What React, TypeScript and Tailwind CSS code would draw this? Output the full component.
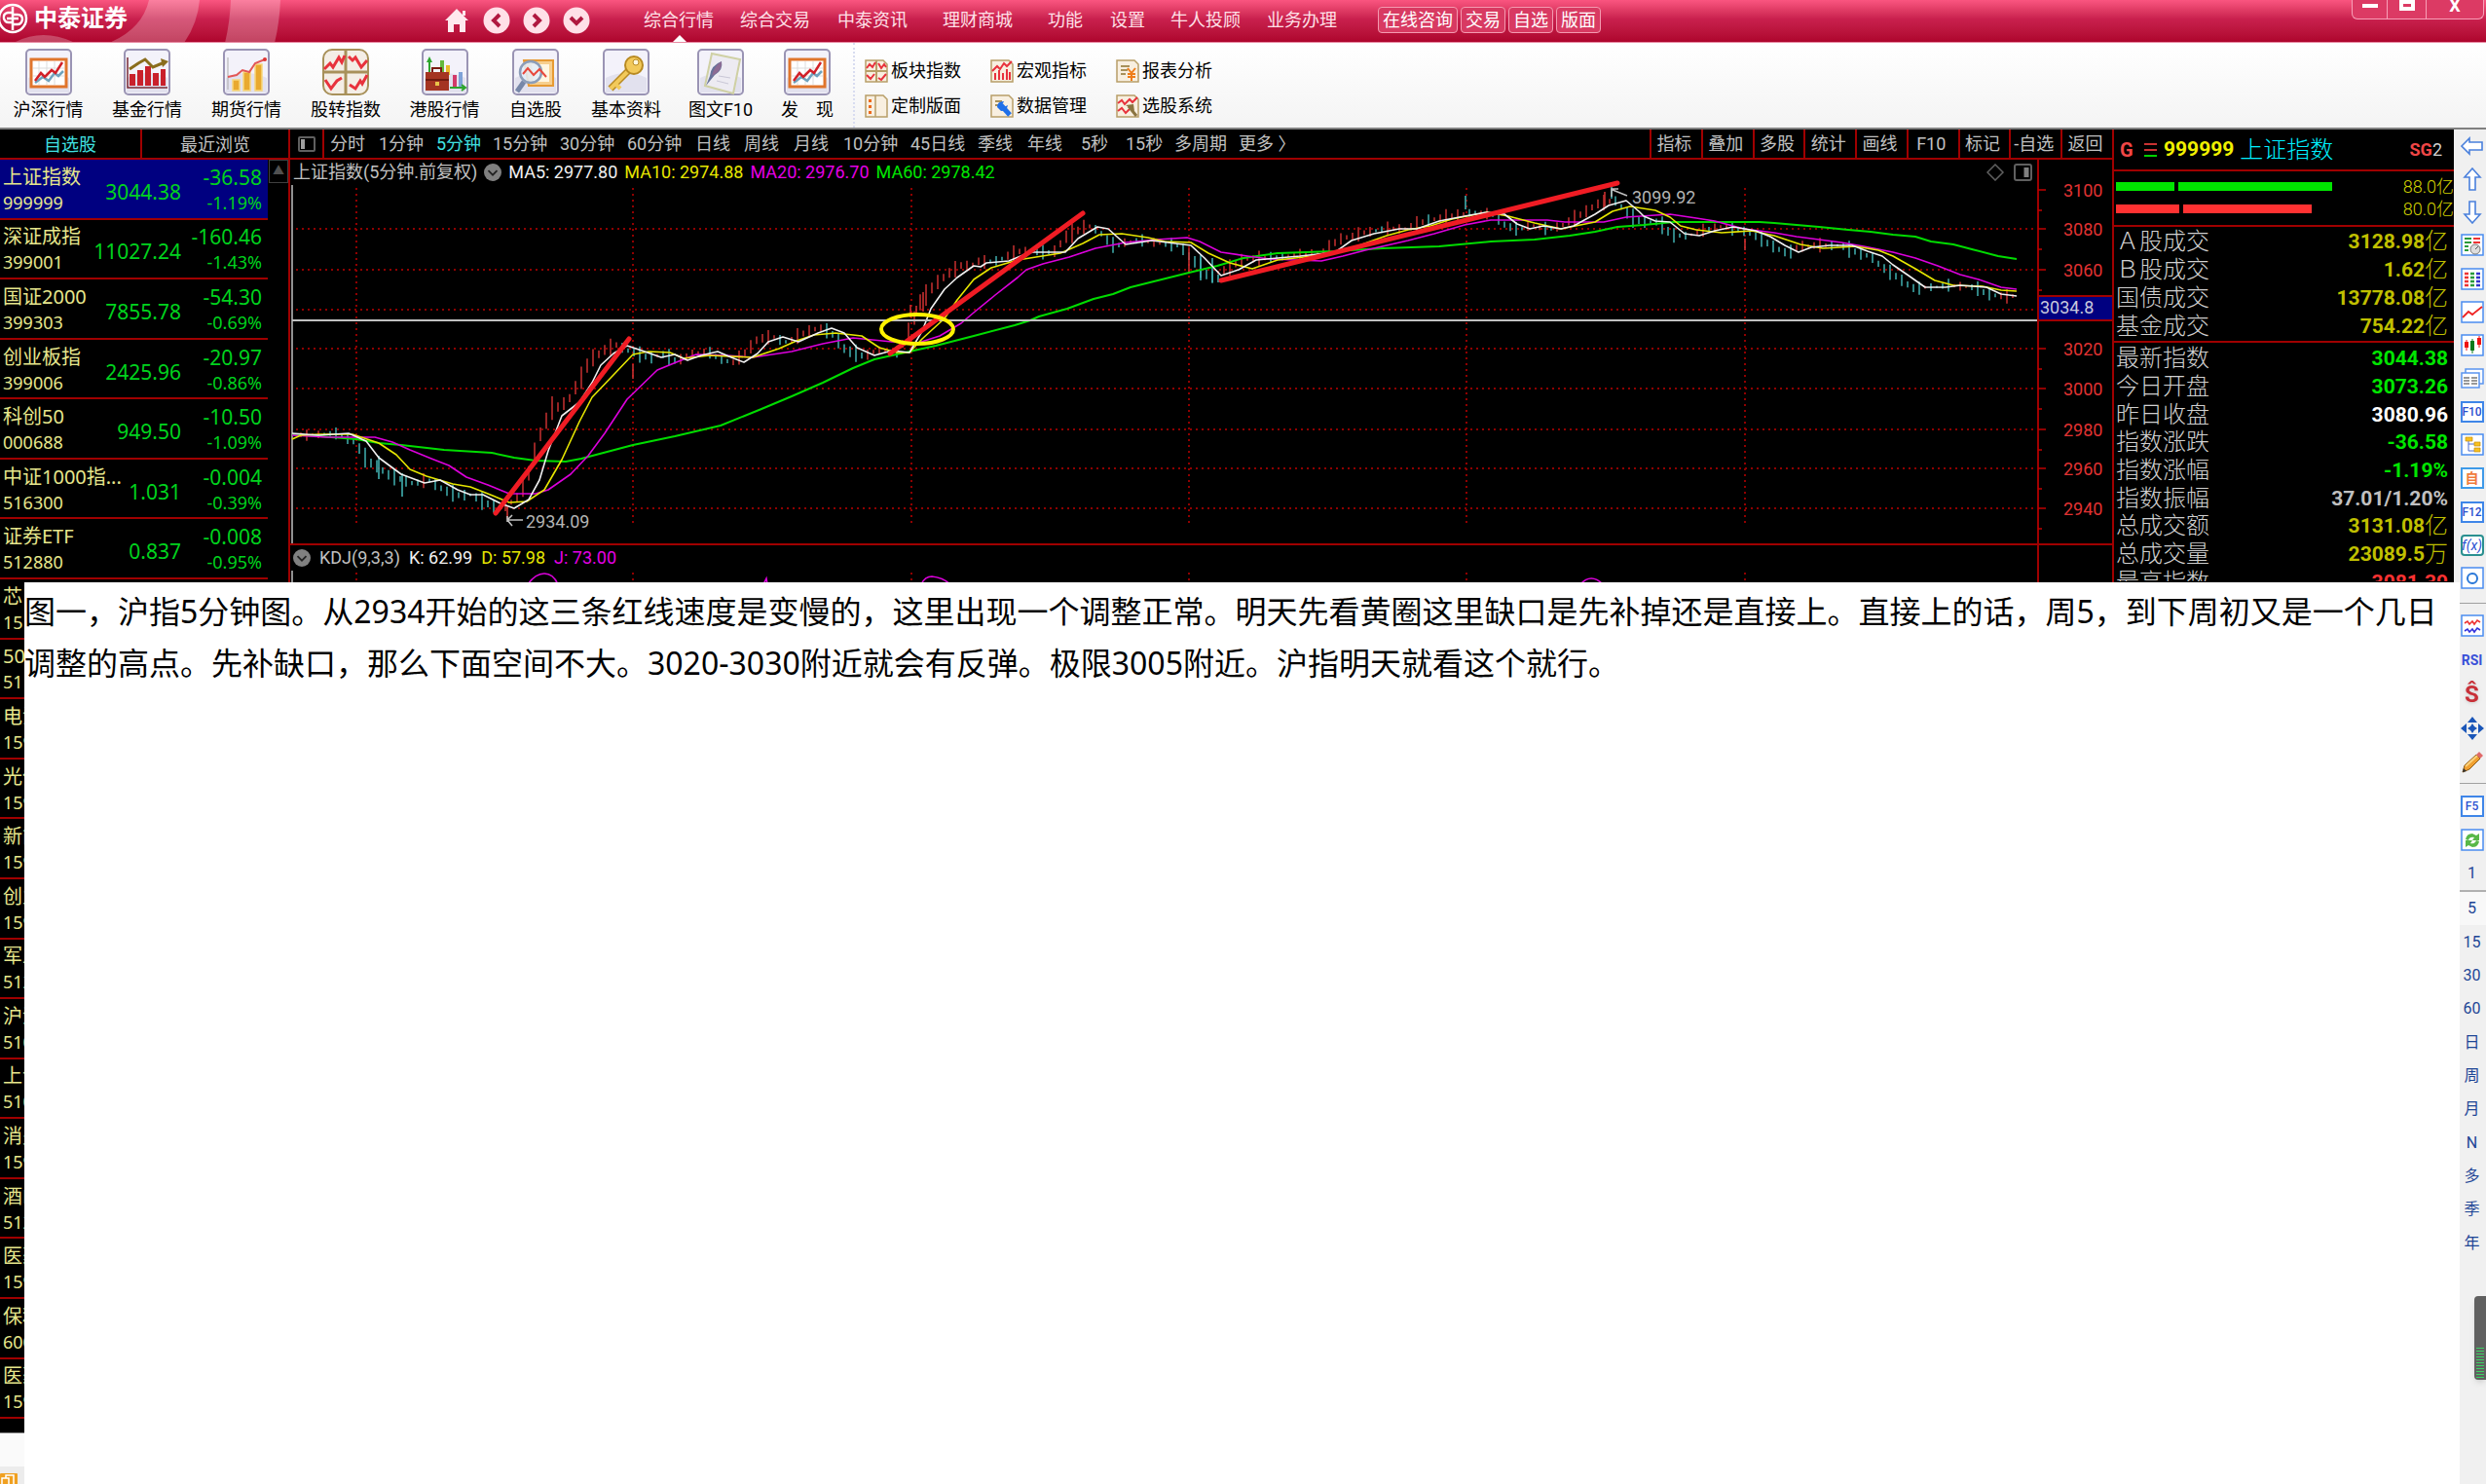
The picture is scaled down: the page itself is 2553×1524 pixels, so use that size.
import React from "react"

type Point = [number, number]

interface Quote {
  name: string
  code: string
  price?: string
  change?: string
  percent?: string
}

const quotes: Quote[] = [
  { name: "上证指数", code: "999999", price: "3044.38", change: "-36.58", percent: "-1.19%" },
  { name: "深证成指", code: "399001", price: "11027.24", change: "-160.46", percent: "-1.43%" },
  { name: "国证2000", code: "399303", price: "7855.78", change: "-54.30", percent: "-0.69%" },
  { name: "创业板指", code: "399006", price: "2425.96", change: "-20.97", percent: "-0.86%" },
  { name: "科创50", code: "000688", price: "949.50", change: "-10.50", percent: "-1.09%" },
  { name: "中证1000指...", code: "516300", price: "1.031", change: "-0.004", percent: "-0.39%" },
  { name: "证券ETF", code: "512880", price: "0.837", change: "-0.008", percent: "-0.95%" },
  { name: "芯", code: "15" },
  { name: "50", code: "51" },
  { name: "电池", code: "159" },
  { name: "光伏", code: "159" },
  { name: "新能", code: "159" },
  { name: "创业", code: "159" },
  { name: "军工", code: "512" },
  { name: "沪深", code: "510" },
  { name: "上证", code: "510" },
  { name: "消费", code: "159" },
  { name: "酒E", code: "512" },
  { name: "医药", code: "159" },
  { name: "保利", code: "600" },
  { name: "医药", code: "159" },
]

const menus = [
  { label: "综合行情", space: "ml-[54px]" },
  { label: "综合交易", space: "ml-[27px]" },
  { label: "中泰资讯", space: "ml-[28px]" },
  { label: "理财商城", space: "ml-[36px]" },
  { label: "功能", space: "ml-[36px]" },
  { label: "设置", space: "ml-[28px]" },
  { label: "牛人投顾", space: "ml-[26px]" },
  { label: "业务办理", space: "ml-[27px]" },
]

const periods = [
  { label: "分时", width: "w-[50px]" },
  { label: "1分钟", width: "w-[59px]" },
  { label: "5分钟", width: "w-[58px]" },
  { label: "15分钟", width: "w-[69px]" },
  { label: "30分钟", width: "w-[69px]" },
  { label: "60分钟", width: "w-[70px]" },
  { label: "日线", width: "w-[50px]" },
  { label: "周线", width: "w-[51px]" },
  { label: "月线", width: "w-[51px]" },
  { label: "10分钟", width: "w-[69px]" },
  { label: "45日线", width: "w-[69px]" },
  { label: "季线", width: "w-[51px]" },
  { label: "年线", width: "w-[55px]" },
  { label: "5秒", width: "w-[46px]" },
  { label: "15秒", width: "w-[50px]" },
  { label: "多周期", width: "w-[66px]" },
  { label: "更多 〉", width: "w-[66px]" },
]

const chartTools = ["指标", "叠加", "多股", "统计", "画线", "F10", "标记", "-自选", "返回"]

const turnover = [
  { label: "Ａ股成交", value: "3128.98", unit: "亿" },
  { label: "Ｂ股成交", value: "1.62", unit: "亿" },
  { label: "国债成交", value: "13778.08", unit: "亿" },
  { label: "基金成交", value: "754.22", unit: "亿" },
]

const details = [
  { label: "最新指数", value: "3044.38", unit: "", color: "text-[#00e600]" },
  { label: "今日开盘", value: "3073.26", unit: "", color: "text-[#00e600]" },
  { label: "昨日收盘", value: "3080.96", unit: "", color: "text-white" },
  { label: "指数涨跌", value: "-36.58", unit: "", color: "text-[#00e600]" },
  { label: "指数涨幅", value: "-1.19%", unit: "", color: "text-[#00e600]" },
  { label: "指数振幅", value: "37.01/1.20%", unit: "", color: "text-[#c0c0c0]" },
  { label: "总成交额", value: "3131.08", unit: "亿", color: "text-[#c0c000]" },
  { label: "总成交量", value: "23089.5", unit: "万", color: "text-[#c0c000]" },
  { label: "最高指数", value: "3081.39", unit: "", color: "text-[#ff3232]" },
]

const ma5: Point[] = [
  [300, 445], [327, 447], [358, 445], [376, 453], [389, 470], [412, 487], [436, 496], [452, 493], [470, 503], [483, 508],
  [496, 508], [514, 517], [528, 522], [543, 513], [554, 493], [563, 463], [577, 427], [595, 413], [608, 393], [617, 375],
  [630, 363], [644, 355], [662, 361], [679, 367], [693, 364], [706, 370], [720, 365], [737, 361], [751, 367], [764, 372],
  [778, 363], [789, 351], [804, 346], [820, 351], [840, 342], [854, 337], [867, 342], [880, 357], [898, 365], [916, 360],
  [934, 362], [947, 340], [956, 317], [970, 297], [983, 285], [1000, 273], [1007, 274], [1013, 270], [1036, 268],
  [1058, 259], [1094, 259], [1107, 245], [1127, 233], [1138, 235], [1156, 251], [1183, 247], [1223, 252], [1237, 265],
  [1254, 283], [1272, 277], [1290, 267], [1312, 265], [1335, 263], [1371, 259], [1388, 247], [1411, 240], [1437, 235],
  [1455, 235], [1478, 227], [1504, 222], [1527, 218], [1545, 220], [1558, 230], [1571, 235], [1585, 232], [1603, 235],
  [1616, 232], [1638, 220], [1652, 211], [1670, 206], [1683, 217], [1688, 222], [1700, 227], [1715, 228], [1730, 240],
  [1745, 242], [1761, 237], [1780, 233], [1803, 237], [1818, 243], [1833, 252], [1847, 259], [1860, 254], [1879, 252],
  [1902, 252], [1918, 258], [1933, 263], [1944, 272], [1960, 283], [1977, 295], [1998, 295], [2013, 293], [2040, 295],
  [2055, 302], [2071, 304],
]

const ma10: Point[] = [
  [300, 451], [309, 447], [327, 446], [362, 446], [371, 449], [389, 455], [407, 467], [421, 482], [438, 489], [465, 497],
  [483, 500], [501, 507], [523, 516], [541, 515], [559, 503], [577, 472], [595, 433], [608, 408], [630, 385], [650, 364],
  [666, 361], [688, 362], [702, 368], [729, 365], [773, 367], [800, 358], [818, 350], [836, 344], [858, 342], [885, 345],
  [903, 357], [921, 362], [934, 362], [947, 348], [970, 327], [983, 308], [1000, 287], [1018, 275], [1045, 267],
  [1089, 260], [1112, 250], [1129, 241], [1152, 240], [1179, 244], [1196, 248], [1223, 249], [1241, 260], [1263, 270],
  [1286, 276], [1312, 267], [1339, 264], [1371, 260], [1393, 253], [1424, 242], [1446, 236], [1469, 232], [1491, 225],
  [1527, 218], [1549, 222], [1576, 229], [1603, 235], [1638, 228], [1656, 217], [1674, 212], [1700, 216], [1715, 223],
  [1726, 232], [1742, 236], [1768, 239], [1799, 237], [1822, 242], [1849, 251], [1872, 255], [1906, 253], [1929, 257],
  [1944, 263], [1967, 276], [1987, 288], [2006, 293], [2036, 294], [2055, 298], [2071, 299],
]

const ma20: Point[] = [
  [300, 447], [336, 449], [385, 449], [403, 454], [421, 462], [443, 471], [461, 478], [479, 490], [501, 498], [523, 507],
  [550, 507], [563, 503], [586, 487], [604, 468], [621, 445], [644, 410], [675, 380], [697, 371], [715, 364], [746, 365],
  [773, 367], [813, 361], [845, 353], [876, 347], [916, 351], [943, 352], [965, 345], [987, 332], [1000, 321],
  [1022, 303], [1045, 285], [1054, 277], [1071, 271], [1098, 264], [1125, 255], [1156, 249], [1188, 246], [1219, 244],
  [1232, 248], [1254, 259], [1281, 263], [1304, 266], [1357, 268], [1379, 263], [1402, 257], [1446, 247], [1473, 240],
  [1504, 231], [1531, 226], [1589, 226], [1607, 228], [1647, 228], [1670, 223], [1700, 221], [1715, 220], [1742, 224],
  [1761, 227], [1791, 235], [1822, 239], [1845, 243], [1891, 249], [1914, 253], [1944, 259], [1967, 265], [1990, 273],
  [2013, 282], [2032, 287], [2055, 295], [2071, 297],
]

const ma60: Point[] = [
  [300, 446], [327, 448], [366, 451], [389, 455], [412, 457], [456, 462], [505, 465], [528, 470], [550, 473], [581, 474],
  [597, 471], [650, 457], [693, 448], [740, 437], [782, 420], [813, 407], [845, 393], [876, 378], [898, 369], [934, 361],
  [961, 355], [1000, 345], [1042, 334], [1058, 329], [1067, 325], [1096, 317], [1123, 307], [1143, 302], [1161, 295],
  [1221, 280], [1250, 273], [1277, 265], [1312, 260], [1370, 258], [1420, 255], [1478, 253], [1531, 248], [1576, 246],
  [1612, 242], [1638, 238], [1661, 233], [1688, 231], [1719, 228], [1807, 228], [1822, 229], [1868, 233], [1898, 236],
  [1921, 238], [1944, 241], [1967, 243], [1983, 248], [2006, 251], [2025, 256], [2052, 263], [2071, 266],
]

const gridX = [366, 650, 936, 1221, 1506, 1792]
const gridY = [235, 277, 318, 358, 399, 441, 481, 522]

const toPoints = (line: Point[]) => line.map((p) => p.join(",")).join(" ")

function valueAt(line: Point[], x: number) {
  for (let i = 1; i < line.length; i++) {
    const [x0, y0] = line[i - 1]
    const [x1, y1] = line[i]
    if (x <= x1) return y0 + ((y1 - y0) * (x - x0)) / (x1 - x0)
  }
  return line[line.length - 1][1]
}

// Five minute bars, they run a little ahead of the short average
const bars = Array.from({ length: 295 }, (_, i) => {
  const x = 303 + i * 6
  const noise = ((i * 7919) % 101) / 101
  const noise2 = ((i * 3571) % 89) / 89
  const mid = valueAt(ma5, x + 10)
  const slope = valueAt(ma5, x + 14) - valueAt(ma5, x + 2)
  const half = 1 + noise * noise * 7 + Math.min(Math.abs(slope) / 4, 6)
  const up = slope + (noise2 - 0.5) * 8 < 0
  return { x, top: mid - half + slope / 3, bottom: mid + half + slope / 3, up }
})

function FrameIcon({ children }: { children: React.ReactNode }) {
  return (
    <svg viewBox="0 0 48 48" className="size-12" aria-hidden="true">
      <rect x="1" y="1" width="46" height="46" rx="4" fill="#f3f2fa" stroke="#9a94b4" strokeWidth="2" />
      <path d="M3 30Q24 20 45 30V45H3Z" fill="#e2e1ee" />
      {children}
    </svg>
  )
}

const TrendIcon = () => (
  <FrameIcon>
    <rect x="6" y="11" width="36" height="28" fill="#fff" stroke="#e0752c" strokeWidth="3" />
    <path d="M14 13V37M22 13V37M30 13V37M8 20H40M8 28H40" stroke="#ddd" />
    <path d="M10 35L18 29 24 33 30 25 34 28 39 23" fill="none" stroke="#6fa3bd" strokeWidth="2.5" />
    <path d="M10 33L16 25 20 29 27 22 31 25 38 14" fill="none" stroke="#d22028" strokeWidth="2.5" />
  </FrameIcon>
)

const FundIcon = () => (
  <FrameIcon>
    <path d="M4 9V40H45" fill="none" stroke="#7b2a35" strokeWidth="1.5" />
    <path d="M6 26h6v12H6zM14 22h6v16h-6zM22 18h6v20h-6zM30 25h6v13h-6zM38 21h5v17h-5z" fill="#c9202b" />
    <path d="M6 21L15 15 22 11 30 19 42 14" fill="none" stroke="#8a6d1d" strokeWidth="3" />
    <path d="M38 10L46 13 40 19Z" fill="#8a6d1d" />
  </FrameIcon>
)

const FuturesIcon = () => (
  <FrameIcon>
    <path d="M5 9V42" stroke="#aaa" />
    <path d="M10 32h7v11h-7zM21 24h7v19h-7zM33 16h7v27h-7z" fill="#e9a92e" stroke="#f7d67c" strokeWidth="1.5" />
    <path d="M5 29L14 27 20 22 27 24 33 15 43 11" fill="none" stroke="#e25757" strokeWidth="2" />
    <circle cx="43" cy="11" r="2" fill="#d33" />
  </FrameIcon>
)

const TransferIcon = () => (
  <svg viewBox="0 0 48 48" className="size-12" aria-hidden="true">
    <rect x="1" y="1" width="46" height="46" rx="9" fill="#f4eee6" stroke="#a8915a" strokeWidth="2" />
    <path d="M24 2V46M2 24H46" stroke="#a8915a" strokeWidth="3" />
    <path d="M2 21L8 15 11 19 17 9 20 14 23 7" fill="none" stroke="#e8323c" strokeWidth="3" />
    <path d="M27 8L31 12 34 9 40 19 46 12" fill="none" stroke="#e8323c" strokeWidth="3" />
    <path d="M3 32L9 41 15 33 20 30" fill="none" stroke="#e8323c" strokeWidth="3" />
    <path d="M28 37L34 41 39 33 41 36 46 27" fill="none" stroke="#e8323c" strokeWidth="3" />
  </svg>
)

const HongKongIcon = () => (
  <FrameIcon>
    <path d="M8 12V24" stroke="#2da52d" strokeWidth="2" />
    <path d="M5 14L8 8 11 14Z" fill="#2da52d" />
    <path d="M19 12h4v12h-4z" fill="#64b93c" />
    <path d="M25 17h4v10h-4z" fill="#e8b92c" />
    <path d="M32 27h4v12h-4z" fill="#d33a6a" />
    <path d="M38 24h4v15h-4z" fill="#7fa3d8" />
    <path d="M11 24V20H20V24" fill="none" stroke="#7a1b12" strokeWidth="2" />
    <rect x="4" y="24" width="24" height="19" fill="#a43422" />
    <path d="M4 32H28" stroke="#6f1a10" strokeWidth="2" />
    <path d="M14 34h4v4h-4z" fill="#e9c34a" />
    <path d="M29 40H44M41 37L45 40 41 43" fill="none" stroke="#2da52d" strokeWidth="2" />
  </FrameIcon>
)

const WatchIcon = () => (
  <FrameIcon>
    <path d="M12 12H42V38H17Z" fill="#f7cf8e" stroke="#e79a33" strokeWidth="2" />
    <path d="M20 16H38V34H22Z" fill="#fff6e2" />
    <circle cx="19" cy="24" r="11" fill="#e3edf9" fillOpacity=".85" stroke="#8c9db8" strokeWidth="2.5" />
    <path d="M11 26L16 20 22 27 28 21 35 29" fill="none" stroke="#e8483c" strokeWidth="2" />
    <path d="M12 34L5 44" stroke="#7787a8" strokeWidth="5" />
  </FrameIcon>
)

const KeyIcon = () => (
  <FrameIcon>
    <path d="M26 23L8 41" stroke="#b88a22" strokeWidth="7" />
    <path d="M26 23L8 41M13 36L18 41" stroke="#f2c95a" strokeWidth="4" />
    <circle cx="32" cy="17" r="9" fill="#f2c95a" stroke="#b88a22" strokeWidth="2" />
    <circle cx="34" cy="14" r="3" fill="#fff7dc" stroke="#b88a22" />
  </FrameIcon>
)

const NoteIcon = () => (
  <FrameIcon>
    <path d="M15 5L44 11 37 46 8 38Z" fill="#edebf2" stroke="#cfd0a4" strokeWidth="2" />
    <path d="M22 28L34 30M20 33L32 36" stroke="#c9c7d6" />
    <path d="M25 13Q14 17 13 28L9 38 18 27Q27 22 25 13Z" fill="#67729a" />
    <path d="M25 13Q17 18 15 28Q26 23 25 13Z" fill="#8d6b93" />
  </FrameIcon>
)

const shortcuts = [
  { label: "沪深行情", width: "w-[101px]", Icon: TrendIcon },
  { label: "基金行情", width: "w-[102px]", Icon: FundIcon },
  { label: "期货行情", width: "w-[102px]", Icon: FuturesIcon },
  { label: "股转指数", width: "w-[102px]", Icon: TransferIcon },
  { label: "港股行情", width: "w-[101px]", Icon: HongKongIcon },
  { label: "自选股", width: "w-[86px]", Icon: WatchIcon },
  { label: "基本资料", width: "w-[100px]", Icon: KeyIcon },
  { label: "图文F10", width: "w-[94px]", Icon: NoteIcon },
  { label: "发　现", width: "w-[84px]", Icon: TrendIcon },
]

function SmallFrame({ children }: { children: React.ReactNode }) {
  return (
    <svg viewBox="0 0 24 24" className="size-6" aria-hidden="true">
      <path d="M1 1H19L23 5V23H1Z" fill="#f8efe0" stroke="#b89f68" strokeWidth="1.5" />
      {children}
    </svg>
  )
}

const smallShortcuts = [
  {
    label: "板块指数",
    icon: (
      <>
        <path d="M12 1V23M1 12H23" stroke="#b89f68" strokeWidth="2" />
        <path d="M2 9L5 5 8 8 11 3M14 4L17 9 20 5 22 8M2 16L6 20 10 15M14 19L17 21 22 15" fill="none" stroke="#e8323c" strokeWidth="2" />
      </>
    ),
  },
  {
    label: "宏观指标",
    icon: (
      <>
        <path d="M5 14v7M9 11v10M13 14v7M17 10v11M20 13v8" stroke="#e8323c" strokeWidth="2" />
        <path d="M2 12L7 7 10 10 14 4 17 7 22 2" fill="none" stroke="#e8323c" strokeWidth="2" />
      </>
    ),
  },
  {
    label: "报表分析",
    icon: (
      <>
        <path d="M5 7H14M5 11H12M5 15H10" stroke="#a8915a" strokeWidth="2" />
        <path d="M12 9L16 14 20 9M16 14V22M12 15H20M12 18H20" fill="none" stroke="#ef7d1a" strokeWidth="2" />
      </>
    ),
  },
  {
    label: "定制版面",
    icon: (
      <>
        <path d="M11 1V23" stroke="#b89f68" strokeWidth="1.5" />
        <path d="M4 5h3v3H4zM4 11h3v3H4zM4 17h3v3H4z" fill="#ef6a1a" />
      </>
    ),
  },
  {
    label: "数据管理",
    icon: (
      <>
        <path d="M5 7H12M5 11H9" stroke="#a8915a" strokeWidth="2" />
        <path d="M11 11L20 21" stroke="#1f6fe8" strokeWidth="5" />
        <path d="M7 13Q7 7 14 7L12 11 14 13 18 11Q17 17 11 17Z" fill="#1f6fe8" />
      </>
    ),
  },
  {
    label: "选股系统",
    icon: (
      <>
        <path d="M2 9L6 6 9 10 14 5 17 8 22 3M2 17L6 14 10 19 14 15" fill="none" stroke="#e8323c" strokeWidth="2" />
        <path d="M13 12L21 22" stroke="#8a7440" strokeWidth="3" />
        <path d="M10 11L18 10 19 17Z" fill="#8a7440" />
      </>
    ),
  },
]

function Box({ children, stroke = "#4a8cf0" }: { children?: React.ReactNode; stroke?: string }) {
  return (
    <svg viewBox="0 0 24 24" className="size-6" aria-hidden="true">
      <rect x="1" y="1" width="22" height="21" fill="#fff" stroke={stroke} strokeWidth="1.5" />
      {children}
    </svg>
  )
}

const Arrow = ({ d }: { d: string }) => (
  <svg viewBox="0 0 24 24" className="size-6" aria-hidden="true">
    <path d={d} fill="#fff" stroke="#4a80dc" strokeWidth="1.6" />
  </svg>
)

const boxText = "flex h-[22px] w-6 items-center justify-center border-2 border-[#3f86e8] bg-white text-xs font-medium text-[#2a50d0]"

const stripTop = [
  { name: "后退", icon: <Arrow d="M1 12L9 4V8H22V16H9V20Z" /> },
  { name: "上移", icon: <Arrow d="M12 1L20 10H15V23H9V10H4Z" /> },
  { name: "下移", icon: <Arrow d="M12 23L20 14H15V1H9V14H4Z" /> },
  {
    name: "报价",
    icon: (
      <Box>
        <path d="M4 5H11M4 9H11M4 13H8M4 17H8" stroke="#2a9a3a" strokeWidth="2" />
        <path d="M13 5H20M13 9H20" stroke="#e33" strokeWidth="2" />
        <circle cx="15" cy="16" r="5" fill="#ddd" stroke="#777" />
        <path d="M15 16L18 13" stroke="#555" />
      </Box>
    ),
  },
  {
    name: "行情列表",
    icon: (
      <Box>
        <path d="M4 6H8M4 10H8M4 14H8M4 18H8" stroke="#e33" strokeWidth="2.5" />
        <path d="M10 6H14M10 10H14M10 14H14M10 18H14" stroke="#2a9a3a" strokeWidth="2.5" />
        <path d="M16 6H20M16 10H20M16 14H20M16 18H20" stroke="#33c" strokeWidth="2.5" />
      </Box>
    ),
  },
  {
    name: "分时走势",
    icon: (
      <Box>
        <path d="M2 17L8 11 12 14 22 6" fill="none" stroke="#e22" strokeWidth="1.8" />
      </Box>
    ),
  },
  {
    name: "K线图",
    icon: (
      <Box>
        <path d="M6 6V17M19 2V14" stroke="#e11" />
        <path d="M12 5V20" stroke="#0a7a1a" />
        <path d="M4 8h4v6H4zM17 4h4v7h-4z" fill="#e11" />
        <path d="M10 7h4v10h-4z" fill="#0a7a1a" />
      </Box>
    ),
  },
  {
    name: "多窗口",
    icon: (
      <svg viewBox="0 0 24 24" className="size-6" aria-hidden="true">
        <rect x="5" y="2" width="18" height="15" fill="#fff" stroke="#5a94f0" strokeWidth="1.5" />
        <rect x="1" y="6" width="18" height="15" fill="#fff" stroke="#5a94f0" strokeWidth="1.5" />
        <path d="M3 11H9M3 14H9M3 17H9M11 11H17M11 14H17M11 17H17" stroke="#333" />
      </svg>
    ),
  },
  { name: "F10", icon: <span className={boxText}>F10</span> },
  {
    name: "板块树",
    icon: (
      <Box>
        <path d="M8 6V18H14M8 11H14" fill="none" stroke="#4a6ad0" />
        <path d="M5 4h7v4H5zM14 9h6v4h-6zM14 15h6v4h-6z" fill="#f8c020" stroke="#c58f10" strokeWidth=".7" />
      </Box>
    ),
  },
  { name: "自选", icon: <span className="flex h-[22px] w-6 items-center justify-center border-2 border-[#3f9ae8] bg-white text-sm font-bold text-[#f07a3c]">自</span> },
  { name: "F12", icon: <span className={boxText}>F12</span> },
  { name: "公式", icon: <span className="flex h-[22px] w-6 items-center justify-center rounded border-2 border-[#2a9090] bg-white text-sm italic text-[#2a50d0]">f(x)</span> },
  {
    name: "圆圈",
    icon: (
      <Box>
        <circle cx="12" cy="12" r="5" fill="none" stroke="#2a78d8" strokeWidth="2" />
      </Box>
    ),
  },
]

const stripMiddle = [
  {
    name: "叠加走势",
    icon: (
      <Box>
        <path d="M4 9L7 7 9 10 12 7 14 10 17 6 20 8" fill="none" stroke="#e33" strokeWidth="1.6" />
        <path d="M4 17L7 15 9 18 12 15 14 18 17 14 20 16" fill="none" stroke="#33d" strokeWidth="1.6" />
      </Box>
    ),
  },
  { name: "RSI", icon: <span className="text-sm font-bold text-[#3a50d8]">RSI</span> },
  { name: "信号", icon: <span className="text-2xl font-bold text-[#c83038] drop-shadow">Ŝ</span> },
  {
    name: "移动",
    icon: (
      <svg viewBox="0 0 24 24" className="size-6" aria-hidden="true">
        <path d="M12 0L17 6H7ZM12 24L7 18H17ZM0 12L6 7V17ZM24 12L18 17V7ZM12 7L14 10 17 12 14 14 12 17 10 14 7 12 10 10Z" fill="#1a56b8" />
      </svg>
    ),
  },
  {
    name: "画笔",
    icon: (
      <svg viewBox="0 0 24 24" className="size-6" aria-hidden="true">
        <path d="M2 22L4 15 16 4 20 8 9 19Z" fill="#f0a030" stroke="#8a5a18" />
        <path d="M5 16L17 5" stroke="#fbd27c" strokeWidth="2" />
        <path d="M16 4L19 1 23 5 20 8Z" fill="#e06a6a" />
        <path d="M2 22L3 18 6 21Z" fill="#333" />
      </svg>
    ),
  },
]

const stripPeriods = ["1", "5", "15", "30", "60", "日", "周", "月", "N", "多", "季", "年"]

function TitleBar() {
  return (
    <header className="relative flex h-11 shrink-0 items-center overflow-hidden border-b border-[#e88aa2] bg-linear-to-b from-[#fa5580] via-[#c9204e] via-45% to-[#ae052d] pb-[2px] text-lg text-[#ffe0e8]">
      <svg viewBox="0 0 300 44" className="absolute left-0 top-0 h-11 w-[300px]" aria-hidden="true">
        <path d="M153 0H205Q203 24 189 44H112Q146 30 153 0Z" fill="#fff" fillOpacity=".25" />
        <path d="M237 0H288Q287 24 282 44H231Q236 24 237 0Z" fill="#fff" fillOpacity=".25" />
        <path d="M14 44Q44 28 77 44Z" fill="#fff" fillOpacity=".25" />
        <circle cx="13" cy="19" r="14" fill="none" stroke="#fff" strokeWidth="2.5" />
        <path d="M13 7V31M13 13H8Q3 14 4 19Q5 23 9 23H13M13 15H18Q23 15 23 20Q22 25 18 25H13M7 19H19" fill="none" stroke="#fff" strokeWidth="2.5" />
      </svg>
      <h1 className="relative ml-[35px] w-[420px] pb-1 text-2xl font-bold leading-8 text-white">中泰证券</h1>
      <div className="flex w-[152px] items-center gap-[13px]">
        <button aria-label="主页">
          <svg viewBox="0 0 28 28" className="size-7">
            <path d="M14 2L26 14H23V26H17V18H11V26H5V14H2Z" fill="#ffe8ee" />
            <path d="M20 4H23V9H20Z" fill="#ffe8ee" />
          </svg>
        </button>
        {[
          { name: "后退", d: "M17 8L11 14 17 20" },
          { name: "前进", d: "M11 8L17 14 11 20" },
          { name: "展开", d: "M8 11L14 17 20 11" },
        ].map((item) => (
          <button key={item.name} aria-label={item.name}>
            <svg viewBox="0 0 28 28" className="size-7">
              <circle cx="14" cy="14" r="13.5" fill="#ffe0e8" />
              <path d={item.d} fill="none" stroke="#b01840" strokeWidth="4" />
            </svg>
          </button>
        ))}
      </div>
      <nav className="flex items-center">
        {menus.map((menu, i) => (
          <a key={menu.label} href="#" className={`relative flex h-10 items-center whitespace-nowrap ${menu.space}`}>
            {menu.label}
            {i === 0 && <span className="absolute -bottom-[3px] left-[29px] border-x-8 border-b-8 border-x-transparent border-b-white" />}
          </a>
        ))}
      </nav>
      <div className="ml-[42px] flex gap-[3px]">
        {["在线咨询", "交易", "自选", "版面"].map((label) => (
          <button key={label} className="h-[27px] whitespace-nowrap rounded border border-[#f49ab0] bg-[#d83a62] px-1 leading-6 text-white">
            {label}
          </button>
        ))}
      </div>
      <div className="ml-auto mr-[2px] flex h-5 self-start rounded-b-md border border-t-0 border-[#f8a0b8] bg-[#dc3a64] text-white">
        <button aria-label="最小化" className="flex w-9 items-center justify-center border-r border-[#f8a0b8] pb-2">
          <span className="h-1 w-4 bg-white" />
        </button>
        <button aria-label="还原" className="flex w-10 items-center justify-center border-r border-[#f8a0b8] pb-2">
          <span className="h-[11px] w-4 border-4 border-white" />
        </button>
        <button aria-label="关闭" className="w-[58px] pb-2 text-lg font-bold leading-3">X</button>
      </div>
    </header>
  )
}

function Toolbar() {
  return (
    <div className="flex h-[89px] shrink-0 border-b-2 border-[#808080] bg-linear-to-b from-white to-[#f4f4f4] text-lg leading-6 text-black">
      {shortcuts.map(({ label, width, Icon }) => (
        <button key={label} className={`flex shrink-0 flex-col items-center whitespace-nowrap pr-[2px] pt-[6px] ${width}`}>
          <Icon />
          <span className="mt-[3px]">{label}</span>
        </button>
      ))}
      <div className="ml-1 grid auto-rows-min grid-cols-3 content-center gap-x-[5px] gap-y-[10px] border-l-2 border-dotted border-[#d8dcf0] pl-[10px] pt-[6px]">
        {smallShortcuts.map((item) => (
          <button key={item.label} className="flex h-[26px] w-[124px] items-center gap-[3px] whitespace-nowrap">
            <SmallFrame>{item.icon}</SmallFrame>
            {item.label}
          </button>
        ))}
      </div>
    </div>
  )
}

function QuoteList() {
  return (
    <aside className="flex w-[298px] shrink-0 flex-col border-r-2 border-[#a00000] bg-black">
      <div className="flex h-[31px] shrink-0 border-b-2 border-[#a00000] text-lg leading-7">
        <button className="w-[146px] border-r-2 border-[#a00000] text-[#40e0e0]">自选股</button>
        <button className="flex-1 text-[#c0c0c0]">最近浏览</button>
      </div>
      <div className="flex min-h-0 flex-1">
        <ul className="flex w-[275px] flex-col pb-[14px]">
          {quotes.map((q, i) => (
            <li
              key={i}
              className={`flex min-h-0 flex-1 items-center border-b-2 border-[#a00000] pl-[3px] pr-[6px] ${i === 0 ? "bg-[#000080]" : ""}`}
            >
              <div className="w-0 whitespace-nowrap text-[#e6e68c]">
                <p className="text-xl leading-7">{q.name}</p>
                <p className="text-lg leading-6">{q.code}</p>
              </div>
              <p className="ml-auto pt-[6px] text-[21px] leading-7 text-[#00d21e]">{q.price}</p>
              <div className="w-[83px] text-right text-[#00d21e]">
                <p className="text-[21px] leading-7">{q.change}</p>
                <p className="text-lg leading-6">{q.percent}</p>
              </div>
            </li>
          ))}
        </ul>
        <button aria-label="向上滚动" className="ml-px flex h-6 w-5 items-center justify-center border border-[#404040] text-xs text-[#505050]">
          ▲
        </button>
      </div>
    </aside>
  )
}

function Dot() {
  return (
    <svg viewBox="0 0 20 20" className="size-[18px]" aria-hidden="true">
      <circle cx="10" cy="10" r="10" fill="#808080" />
      <path d="M5 8L10 13 15 8" fill="none" stroke="#222" strokeWidth="2" />
    </svg>
  )
}

function PriceChart() {
  return (
    <svg viewBox="298 190 1794 368" className="h-[368px] w-full overflow-visible" role="img" aria-label="上证指数5分钟K线">
      <g stroke="#900000" strokeWidth="2" strokeDasharray="2 4">
        {gridX.map((x) => (
          <path key={x} d={`M${x} 193V538`} />
        ))}
        {gridY.map((y) => (
          <path key={y} d={`M304 ${y}H2090`} />
        ))}
      </g>
      <path d="M300 190V558" stroke="#909090" strokeWidth="2" />
      {bars.map((bar) => (
        <path key={bar.x} d={`M${bar.x} ${bar.top}V${bar.bottom}`} stroke={bar.up ? "#c83030" : "#40b0b0"} strokeWidth="1.5" />
      ))}
      <g stroke="#c83030" strokeWidth="1.6">
        <path d="M650 374V389M935 313V326M941 314V322M948 300V320M1221 255V280M1648 197V212M1792 245V257M521 520V533" />
      </g>
      <path d="M1505 201V215M1655 192V204M1233 262V288M1245 265V290M1251 282V290M389 468V492M413 486V510" stroke="#40b0b0" strokeWidth="1.6" />
      <g fill="none" strokeWidth="1.6" strokeLinejoin="round">
        <polyline points={toPoints(ma60)} stroke="#00dc00" strokeWidth="2" />
        <polyline points={toPoints(ma20)} stroke="#dc00dc" />
        <polyline points={toPoints(ma10)} stroke="#e6e600" />
        <polyline points={toPoints(ma5)} stroke="#f0f0f0" />
      </g>
      <path d="M300 329H2092" stroke="#c0c0c0" strokeWidth="2" />
      <g stroke="#f01c24" strokeWidth="5" strokeLinecap="round">
        <path d="M509 527L646 348" />
        <path d="M914 363L1112 219" />
        <path d="M1254 288L1661 188" />
      </g>
      <ellipse cx="942" cy="338" rx="37" ry="15" fill="none" stroke="#fff200" strokeWidth="4" />
      <g fill="none" stroke="#c0c0c0" strokeWidth="1.6">
        <path d="M537 534H521M526 529L521 534 526 540M521 530V536" />
        <path d="M1671 201L1656 195M1655 202V194H1662" />
      </g>
      <g fill="#b4b4b4" className="text-lg">
        <text x="540" y="542">2934.09</text>
        <text x="1676" y="209">3099.92</text>
      </g>
    </svg>
  )
}

function PriceAxis() {
  const labels: [string, number][] = [
    ["3100", 195], ["3080", 235], ["3060", 277], ["3020", 358], ["3000", 399], ["2980", 441], ["2960", 481], ["2940", 522],
  ]
  return (
    <svg viewBox="2092 164 77 394" className="h-[394px] w-[77px] shrink-0" role="img" aria-label="价格坐标">
      <path d="M2093 164V558" stroke="#a00000" strokeWidth="2" />
      {labels.map(([label, y]) => (
        <g key={label}>
          <path d={`M2093 ${y}H2101M2093 ${y + 21}H2097`} stroke="#c00000" strokeWidth="1.6" />
          <text x="2119" y={y + 7} fill="#e03232" className="text-lg">
            {label}
          </text>
        </g>
      ))}
      <rect x="2094" y="305" width="75" height="24" fill="#000080" />
      <path d="M2092 304H2169M2092 329H2169" stroke="#a00000" strokeWidth="2" />
      <text x="2095" y="322" fill="#c8c8dc" className="text-lg">
        3034.8
      </text>
    </svg>
  )
}

function ChartPanel() {
  return (
    <main className="flex min-w-0 flex-1 flex-col bg-black text-lg text-[#c0c0c0]">
      <div className="flex h-[31px] shrink-0 border-b-2 border-[#a00000] leading-7">
        <button aria-label="切换侧栏" className="flex w-[35px] items-center justify-center border-r-2 border-[#a00000]">
          <span className="flex h-4 w-[18px] rounded-xs border-2 border-[#606060] p-px">
            <span className="w-1 bg-[#a0a0a0]" />
          </span>
        </button>
        <div className="flex pl-[6px]">
          {periods.map((p) => (
            <button key={p.label} className={`whitespace-nowrap text-left ${p.width} ${p.label === "5分钟" ? "text-[#40e0e0]" : ""}`}>
              {p.label}
            </button>
          ))}
        </div>
        <div className="ml-auto grid w-[475px] grid-cols-9">
          {chartTools.map((tool) => (
            <button key={tool} className="whitespace-nowrap border-l-2 border-[#a00000] pr-1">
              {tool}
            </button>
          ))}
        </div>
      </div>
      <div className="flex h-[394px] shrink-0">
        <div className="flex min-w-0 flex-1 flex-col">
          <div className="flex h-[26px] items-center gap-[7px] whitespace-nowrap pl-[3px] pr-1">
            <span>上证指数(5分钟.前复权)</span>
            <Dot />
            <span className="text-[#f0f0f0]">MA5: 2977.80</span>
            <span className="text-[#e6e600]">MA10: 2974.88</span>
            <span className="text-[#e600e6]">MA20: 2976.70</span>
            <span className="text-[#00e600]">MA60: 2978.42</span>
            <svg viewBox="0 0 48 18" className="ml-auto h-[18px] w-12" fill="none" stroke="#606060" aria-hidden="true">
              <path d="M9 1L17 9 9 17 1 9Z" strokeWidth="1.5" />
              <rect x="29" y="1" width="17" height="16" rx="2" strokeWidth="2" />
              <path d="M41 4V14" stroke="#808080" strokeWidth="5" />
            </svg>
          </div>
          <PriceChart />
        </div>
        <PriceAxis />
      </div>
      <div className="flex flex-1 border-t-2 border-[#a00000]">
        <div className="min-w-0 flex-1">
          <div className="flex h-[26px] items-center gap-[9px] pl-[3px]">
            <Dot />
            <span>KDJ(9,3,3)</span>
            <span className="text-[#f0f0f0]">K: 62.99</span>
            <span className="text-[#e6e600]">D: 57.98</span>
            <span className="text-[#e600e6]">J: 73.00</span>
          </div>
          <svg viewBox="298 586 1794 14" className="h-[14px] w-full" aria-hidden="true">
            <path d="M300 586V600" stroke="#909090" strokeWidth="2" />
            {gridX.map((x) => (
              <path key={x} d={`M${x} 588V600`} stroke="#900000" strokeWidth="2" strokeDasharray="2 4" />
            ))}
            <path
              d="M542 600Q550 589 559 589T573 600M784 600L787 594 788 600M946 600Q950 592 957 592 968 593 976 600M1623 600Q1634 588 1646 600"
              fill="none"
              stroke="#dc00dc"
              strokeWidth="1.6"
            />
          </svg>
        </div>
        <div className="w-[77px] border-l-2 border-[#a00000]" />
      </div>
    </main>
  )
}

function IndexPanel() {
  return (
    <section className="flex w-[351px] shrink-0 flex-col border-l-2 border-[#a00000] bg-black text-2xl text-[#d0d0d0]">
      <div className="flex h-[43px] shrink-0 items-center whitespace-nowrap border-b-2 border-[#a00000] pl-[6px] pr-3 text-xl">
        <span className="w-[25px] font-bold text-[#f04646]">G</span>
        <span className="flex w-[13px] flex-col gap-1">
          <span className="h-[2px] bg-[#c83232]" />
          <span className="h-[2px] bg-[#c83232]" />
          <span className="h-[2px] bg-[#00d200]" />
        </span>
        <strong className="ml-[7px] text-[21px] text-[#f0f000]">999999</strong>
        <span className="ml-[6px] text-2xl font-light text-[#00f0ff]">上证指数</span>
        <span className="ml-auto text-lg">
          <b className="text-[#f04646]">SG</b>2
        </span>
      </div>
      <div className="flex h-[57px] shrink-0 flex-col border-b-2 border-[#a00000] pl-[2px] pt-1 text-lg font-light leading-[23px] text-[#d2d200]">
        <div className="flex items-center gap-1">
          <span className="h-[9px] w-[60px] bg-[#00e600]" />
          <span className="h-[9px] w-[158px] bg-[#00e600]" />
          <span className="ml-auto">88.0亿</span>
        </div>
        <div className="flex items-center gap-1">
          <span className="h-[9px] w-[65px] bg-[#ff3232]" />
          <span className="h-[9px] w-[132px] bg-[#ff3232]" />
          <span className="ml-auto">80.0亿</span>
        </div>
      </div>
      <dl className="flex h-[119px] shrink-0 flex-col border-b-2 border-[#a00000] pb-px pl-[2px] pr-[6px] pt-px leading-7">
        {turnover.map((row) => (
          <div key={row.label} className="flex min-h-0 flex-1 items-center justify-between font-light">
            <dt>{row.label}</dt>
            <dd className="flex items-center text-[#c0c000]">
              <b className="text-[21px] font-bold">{row.value}</b>
              {row.unit}
            </dd>
          </div>
        ))}
      </dl>
      <div className="h-[245px] shrink-0 overflow-hidden">
        <dl className="flex h-[260px] flex-col pl-[2px] pr-[6px] pt-[2px] leading-7">
          {details.map((row) => (
            <div key={row.label} className="flex min-h-0 flex-1 items-center justify-between font-light">
              <dt>{row.label}</dt>
              <dd className={`flex items-center ${row.color}`}>
                <b className="text-[21px] font-bold">{row.value}</b>
                {row.unit}
              </dd>
            </div>
          ))}
        </dl>
      </div>
    </section>
  )
}

function ToolStrip() {
  const cell = "flex min-h-0 flex-1 items-center justify-center pl-1"
  return (
    <aside className="relative flex w-[33px] shrink-0 flex-col overflow-hidden bg-[#f0f0f0] text-base text-[#1e4696]">
      <div className="flex h-[482px] flex-col pb-1">
        {stripTop.map((item) => (
          <button key={item.name} aria-label={item.name} className={cell}>
            {item.icon}
          </button>
        ))}
      </div>
      <hr className="mb-[6px] mt-1 border-[#a0a0a0]" />
      <div className="flex h-[174px] flex-col">
        {stripMiddle.map((item) => (
          <button key={item.name} aria-label={item.name} className={cell}>
            {item.icon}
          </button>
        ))}
      </div>
      <hr className="mb-[6px] mt-1 border-[#a0a0a0]" />
      <div className="flex h-[483px] flex-col">
        <button aria-label="F5" className={cell}>
          <span className={boxText}>F5</span>
        </button>
        <button aria-label="刷新" className={cell}>
          <Box>
            <path d="M5 11Q6 5 12 5L16 7 19 5V12H12L14 9Q9 8 8 12ZM19 13Q18 19 12 19L8 17 5 19V12H12L10 15Q15 16 16 12Z" fill="#58b848" />
          </Box>
        </button>
        {stripPeriods.map((label) => (
          <button key={label} className={`${cell} ${label === "5" ? "border-t-2 border-[#b0b0b0] bg-[#f8f8f8]" : ""}`}>
            {label}
          </button>
        ))}
      </div>
      <div className="mt-[37px] flex h-[86px] w-3 shrink-0 flex-col justify-end gap-[2px] self-end rounded-l bg-[#606060] p-[2px] shadow-md">
        {Array.from({ length: 11 }, (_, i) => (
          <span key={i} className="h-px bg-[#3cd264]" />
        ))}
      </div>
    </aside>
  )
}

export default function App() {
  return (
    <div className="relative flex h-screen flex-col overflow-hidden bg-[#fafafa] font-[Roboto,'Noto_Sans_CJK_SC',sans-serif]">
      <TitleBar />
      <Toolbar />
      <div className="flex min-h-0 flex-1">
        <div className="flex min-w-0 flex-1 flex-col">
          <div className="flex min-h-0 flex-1">
            <div className="flex font-['Noto_Sans','Noto_Sans_CJK_SC',sans-serif]">
              <QuoteList />
            </div>
            <ChartPanel />
            <IndexPanel />
          </div>
          <footer className="flex h-[53px] shrink-0 flex-col justify-end border-t border-[#808080] bg-[#fafafa]">
            <div className="h-[18px] bg-[#ececec] pt-[7px]">
              <svg viewBox="0 0 20 11" className="h-[11px] w-5" aria-hidden="true">
                <rect width="18" height="14" rx="1" fill="#f0a020" />
                <path d="M2 11V5H9V11M6 5V2H14V11" fill="none" stroke="#fff" strokeWidth="1.5" />
              </svg>
            </div>
          </footer>
        </div>
        <ToolStrip />
      </div>
      <article className="absolute bottom-0 left-[25px] right-[27px] top-[598px] bg-white pt-[3px] font-['Noto_Sans','Noto_Sans_CJK_SC',sans-serif] text-[32px] leading-[53px] text-black">
        <p className="whitespace-nowrap">
          图一，沪指5分钟图。从2934开始的这三条红线速度是变慢的，这里出现一个调整正常。明天先看黄圈这里缺口是先补掉还是直接上。直接上的话，周5，到下周初又是一个几日
          <br />
          调整的高点。先补缺口，那么下面空间不大。3020-3030附近就会有反弹。极限3005附近。沪指明天就看这个就行。
        </p>
      </article>
    </div>
  )
}
